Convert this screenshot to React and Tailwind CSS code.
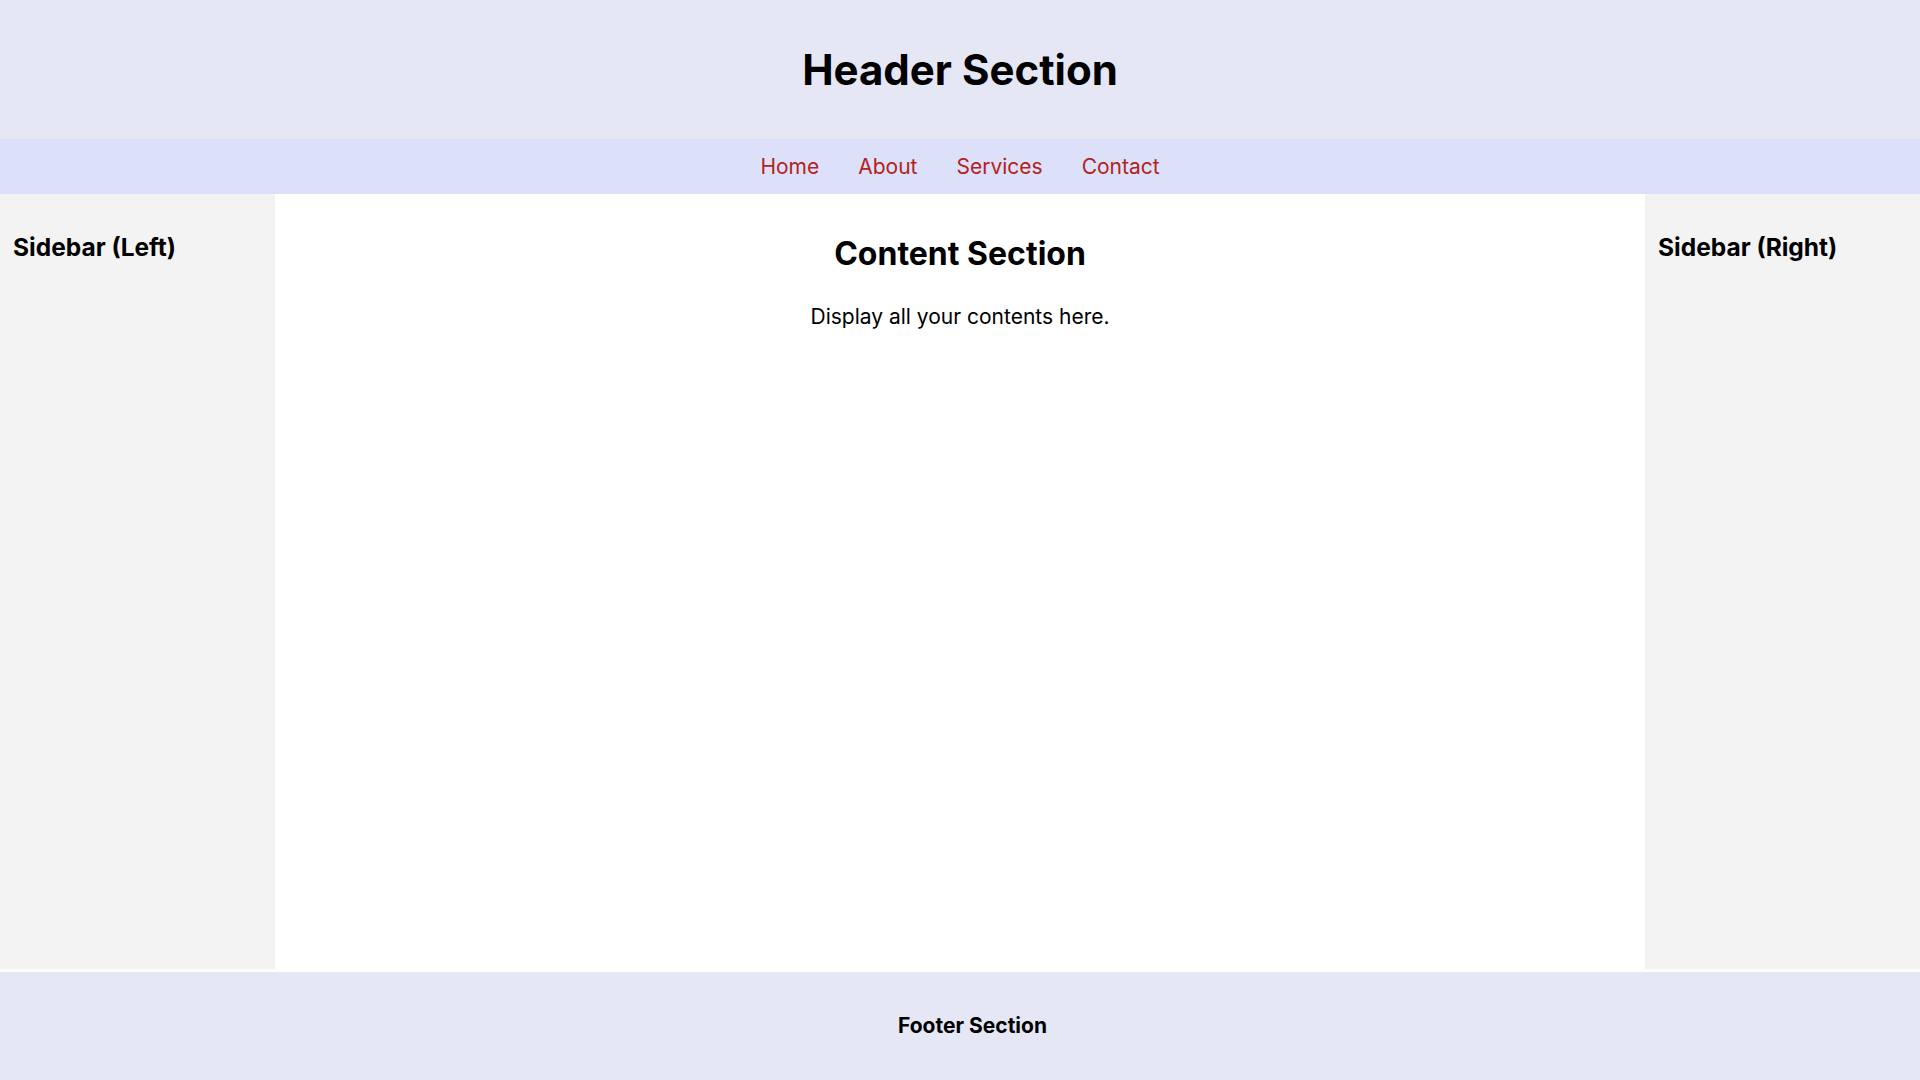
export default function App() {
  const links = ["Home", "About", "Services", "Contact"];

  return (
    <div className="flex h-screen flex-col bg-white font-['Inter',sans-serif] text-black">
      {/* Header */}
      <header className="flex h-[139px] items-center justify-center bg-[#e5e7f4]">
        <h1 className="text-[42px] font-bold">Header Section</h1>
      </header>

      {/* Nav */}
      <nav className="flex h-[55px] items-center justify-center gap-[39px] bg-[#dde0f9]">
        {links.map((link) => (
          <a key={link} href="#" className="text-[21px] text-[#b22222]">
            {link}
          </a>
        ))}
      </nav>

      {/* Main */}
      <div className="flex flex-1">
        <aside className="w-[275px] bg-[#f3f3f3] px-[13px] pt-[35px]">
          <h3 className="text-[24.5px] font-bold">Sidebar (Left)</h3>
        </aside>

        <main className="flex-1 pt-[36px] text-center">
          <h2 className="text-[32px] font-bold">Content Section</h2>
          <p className="mt-[23px] text-[21px]">Display all your contents here.</p>
        </main>

        <aside className="w-[275px] bg-[#f3f3f3] px-[13px] pt-[35px]">
          <h3 className="text-[24.5px] font-bold">Sidebar (Right)</h3>
        </aside>
      </div>

      {/* Footer */}
      <footer className="mt-[3px] flex h-[108px] items-center justify-center bg-[#e5e7f4] pl-[25px]">
        <p className="text-[21px] font-bold">Footer Section</p>
      </footer>
    </div>
  );
}
